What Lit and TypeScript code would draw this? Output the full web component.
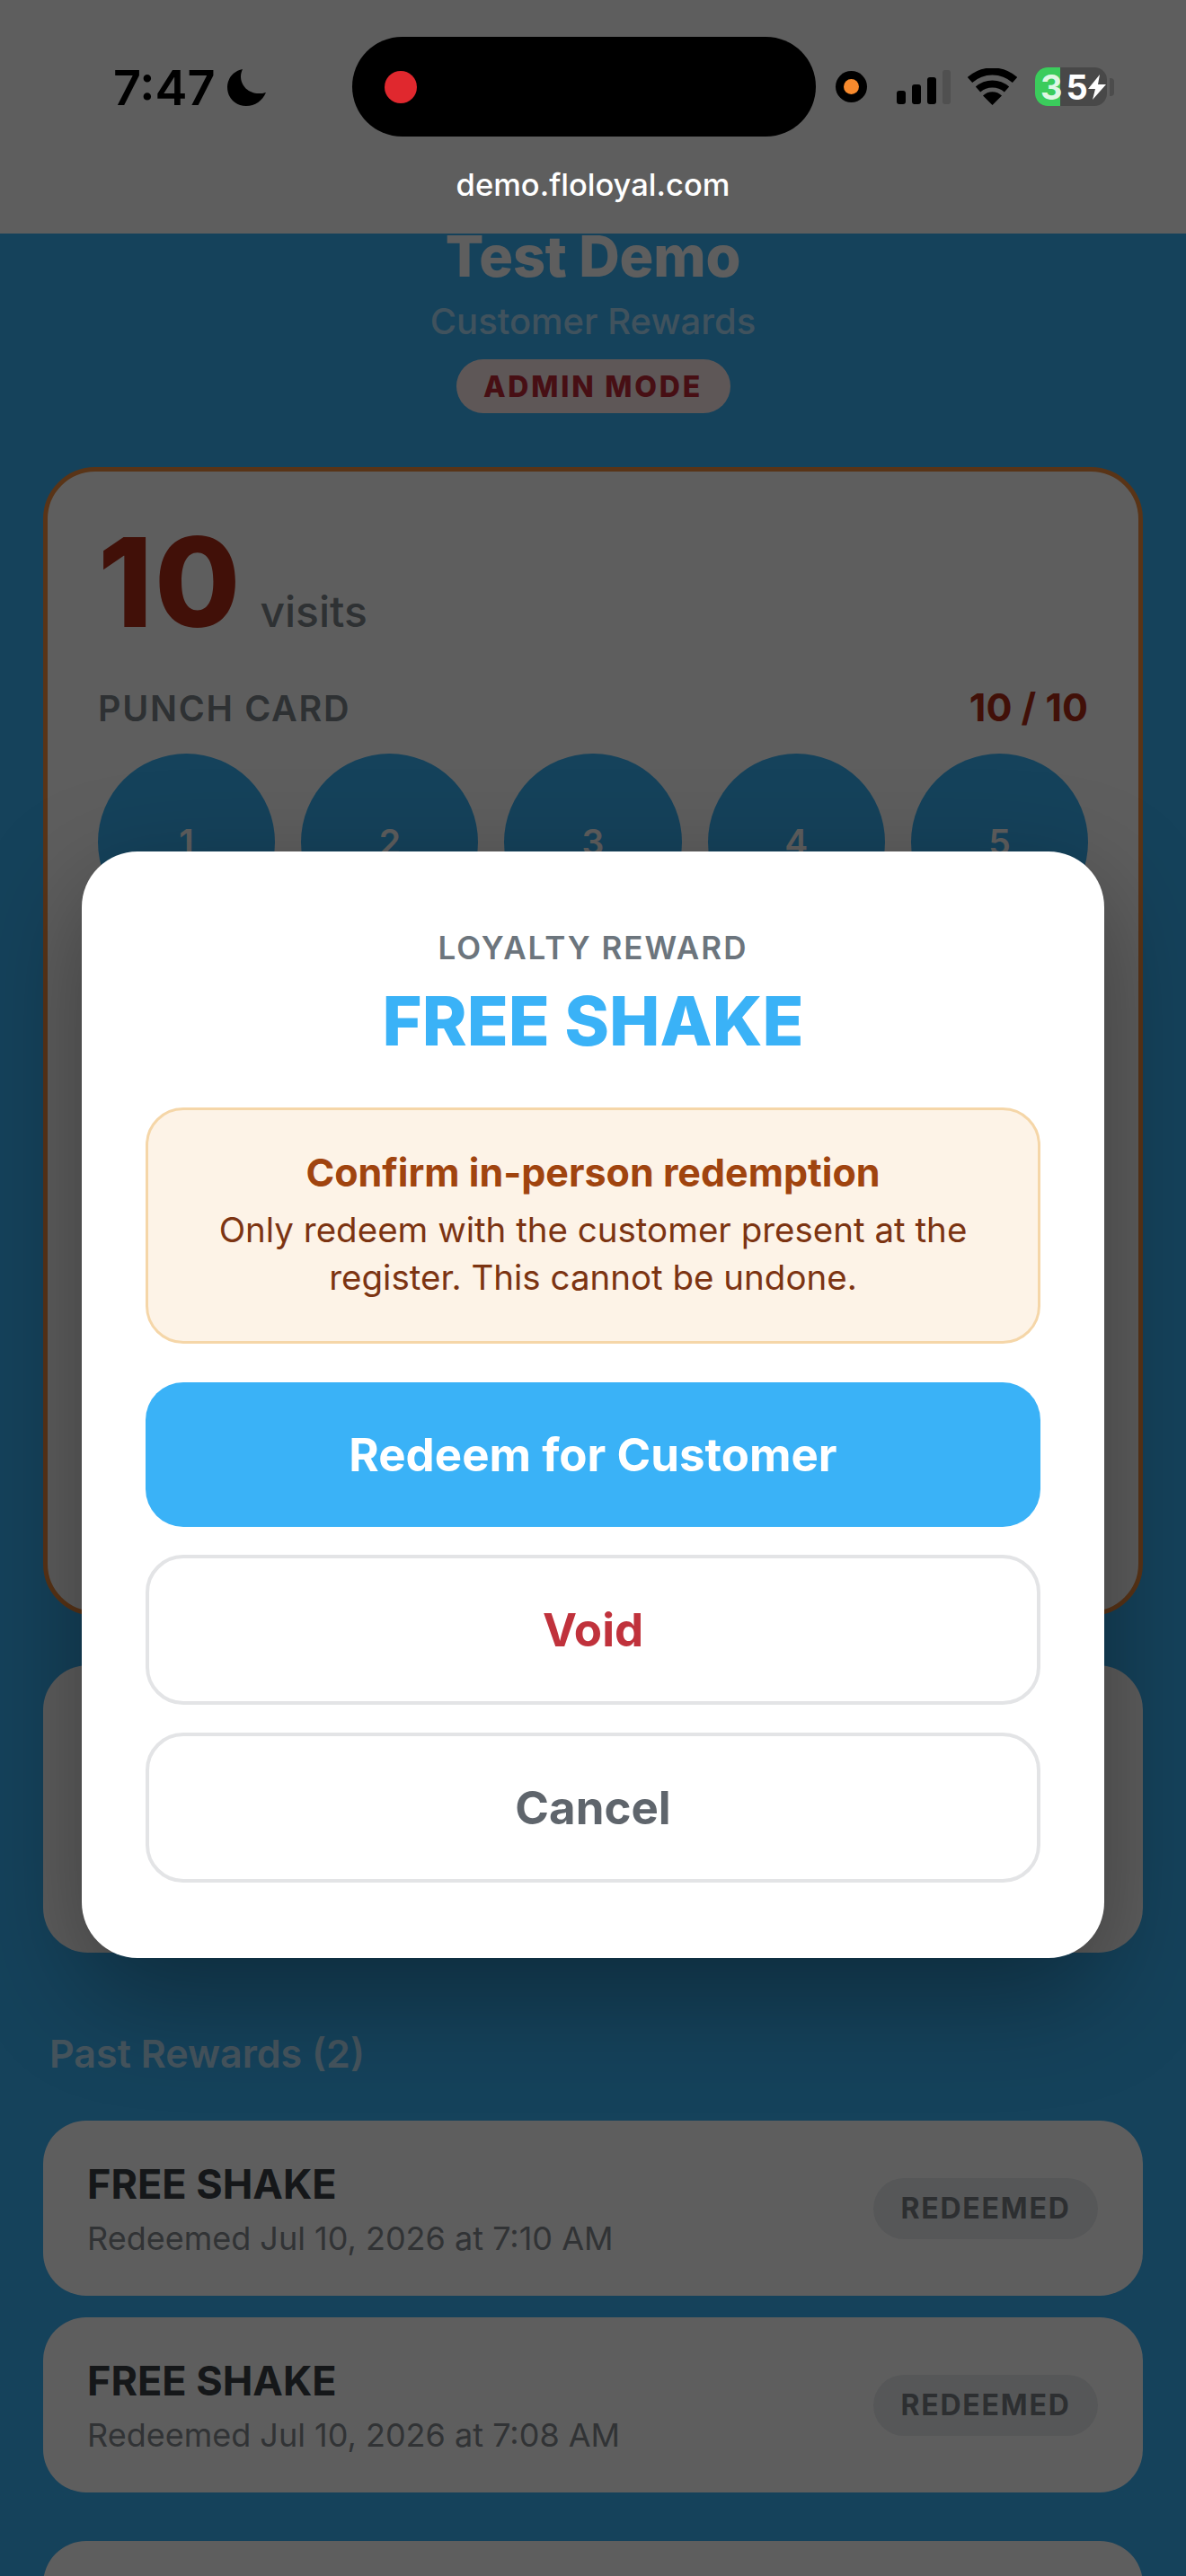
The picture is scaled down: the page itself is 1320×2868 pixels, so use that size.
import { css, html, LitElement } from 'lit';
import { customElement } from 'lit/decorators.js';
import { map } from 'lit/directives/map.js';

interface PastReward {
  title: string;
  when: string;
}

// the second row of punches sits fully behind the dialog
const PUNCHES = [1, 2, 3, 4, 5];

const PAST_REWARDS: PastReward[] = [
  { title: 'FREE SHAKE', when: 'Redeemed Jul 10, 2026 at 7:10 AM' },
  { title: 'FREE SHAKE', when: 'Redeemed Jul 10, 2026 at 7:08 AM' },
];

@customElement('app-root')
export class AppRoot extends LitElement {
  static override styles = css`
    :host {
      display: block;
      position: relative;
      width: 1320px;
      height: 2868px;
      overflow: hidden;
      font-family: Inter, 'Liberation Sans', sans-serif;
    }
    * {
      box-sizing: border-box;
    }

    /* page under the dialog */
    .page {
      height: 2868px;
      padding: 254px 48px 0;
      background: #3ab2f7;
    }
    .brand {
      margin: 0;
      font-size: 63px;
      line-height: 62px;
      font-weight: 800;
      letter-spacing: -0.2px;
      text-align: center;
      color: #fff;
    }
    .tagline {
      margin-top: 20px;
      font-size: 40px;
      line-height: 44px;
      font-weight: 500;
      text-align: center;
      color: rgba(255, 255, 255, 0.6);
    }
    .admin-row {
      display: flex;
      justify-content: center;
      margin-top: 20px;
    }
    .admin-pill {
      display: flex;
      align-items: center;
      justify-content: center;
      width: 305px;
      height: 60px;
      border-radius: 30px;
      background: #ffecec;
      color: #c02a38;
      font-size: 32px;
      font-weight: 800;
      letter-spacing: 2.8px;
    }
    .card {
      height: 1279px;
      margin-top: 60px;
      padding: 56px 56px 0;
      border: 5px solid #f28e3e;
      border-radius: 58px;
      background: #fff;
    }
    .visits {
      display: flex;
      align-items: baseline;
      gap: 20px;
    }
    .visits b {
      font-size: 138px;
      line-height: 134px;
      font-weight: 800;
      letter-spacing: 2px;
      color: #b02c16;
    }
    .visits span {
      font-size: 48px;
      font-weight: 500;
      color: #7d858c;
    }
    .punch-head {
      display: flex;
      align-items: baseline;
      justify-content: space-between;
      margin-top: 50px;
      line-height: 44px;
      font-size: 39.500px;
      font-weight: 600;
      letter-spacing: 1.7px;
      color: #7d858c;
    }
    .punch-head b {
      font-size: 43px;
      font-weight: 700;
      letter-spacing: 0;
      color: #b02c16;
    }
    .punches {
      display: grid;
      grid-template-columns: repeat(5, 1fr);
      gap: 29px;
      margin-top: 28px;
    }
    .punch {
      display: flex;
      align-items: center;
      justify-content: center;
      aspect-ratio: 1;
      border-radius: 50%;
      background: #3ab2f7;
      color: #fff;
      font-size: 39px;
      font-weight: 600;
    }
    .blank-card {
      height: 320px;
      margin-top: 55px;
      border-radius: 50px;
      background: #fff;
    }
    .past-title {
      margin-top: 89px;
      padding-left: 7px;
      font-size: 43px;
      line-height: 46px;
      font-weight: 600;
      color: rgba(255, 255, 255, 0.68);
    }
    .rows {
      display: flex;
      flex-direction: column;
      gap: 24px;
      margin-top: 52px;
    }
    .row {
      display: flex;
      align-items: center;
      justify-content: space-between;
      height: 195px;
      padding: 0 50px 0 49px;
      border-radius: 48px;
      background: #fff;
    }
    .row-title {
      padding-top: 2px;
      font-size: 45px;
      line-height: 50px;
      font-weight: 700;
      color: #3a3f45;
    }
    .row-when {
      margin-top: 14px;
      font-size: 36px;
      line-height: 42px;
      color: #858b91;
    }
    .status-pill {
      display: flex;
      align-items: center;
      justify-content: center;
      width: 250px;
      height: 68px;
      border-radius: 34px;
      background: #e9ecef;
      color: #7b8085;
      font-size: 32px;
      font-weight: 700;
      letter-spacing: 1.8px;
    }
    .tail-card {
      height: 200px;
      margin-top: 54px;
      border-radius: 48px;
      background: #fff;
    }

    /* dialog */
    .scrim {
      position: absolute;
      inset: 0;
      display: flex;
      justify-content: center;
      align-items: flex-start;
      padding-top: 948px;
      background: rgba(0, 0, 0, 0.63);
    }
    .modal {
      width: 1138px;
      padding: 86px 71px 84px;
      border-radius: 62px;
      background: #fff;
      box-shadow: 0 40px 120px rgba(0, 0, 0, 0.35);
    }
    .eyebrow {
      font-size: 35px;
      line-height: 42px;
      font-weight: 600;
      letter-spacing: 2px;
      text-align: center;
      color: #6c757d;
    }
    .reward-name {
      margin: 14px 0 0;
      font-size: 75.500px;
      line-height: 94px;
      font-weight: 800;
      text-align: center;
      color: #3ab2f7;
    }
    .warning {
      height: 263px;
      margin-top: 49px;
      padding: 44px 40px;
      border: 3px solid #f5d6a8;
      border-radius: 42px;
      background: #fdf3e7;
      text-align: center;
    }
    .warning-title {
      font-size: 43px;
      line-height: 50px;
      font-weight: 700;
      color: #a0440f;
    }
    .warning-body {
      margin-top: 13px;
      font-size: 38.500px;
      line-height: 53px;
      color: #7c3412;
    }
    .btn {
      display: flex;
      align-items: center;
      justify-content: center;
      width: 100%;
      height: 167px;
      margin-top: 31px;
      padding: 0;
      border: 4px solid #e3e4e6;
      border-radius: 42px;
      background: #fff;
      font-family: inherit;
      font-size: 51px;
      font-weight: 700;
    }
    .btn.primary {
      height: 161px;
      margin-top: 43px;
      border: none;
      background: #3ab2f7;
      color: #fff;
    }
    .btn.void {
      color: #c0323c;
    }
    .btn.cancel {
      color: #5f656c;
    }

    /* browser chrome on top of everything */
    .chrome {
      position: absolute;
      top: 0;
      left: 0;
      right: 0;
      height: 260px;
      padding-top: 41px;
      background: #5e5e5e;
    }
    .status {
      display: grid;
      grid-template-columns: 392px 516px 1fr;
      align-items: center;
      height: 111px;
    }
    .status-left {
      display: flex;
      align-items: center;
      gap: 13px;
      padding: 2px 0 0 126px;
    }
    .time {
      font-size: 54px;
      line-height: 54px;
      font-weight: 600;
      color: #000;
    }
    .island {
      display: flex;
      align-items: center;
      height: 111px;
      padding-left: 36px;
      border-radius: 56px;
      background: #000;
    }
    .rec {
      width: 36px;
      height: 36px;
      border-radius: 50%;
      background: #e0282e;
    }
    .status-right {
      display: flex;
      align-items: center;
      padding-left: 22px;
    }
    .cam {
      display: flex;
      align-items: center;
      justify-content: center;
      width: 35px;
      height: 35px;
      border-radius: 50%;
      background: #000;
    }
    .cam i {
      width: 17px;
      height: 17px;
      border-radius: 50%;
      background: #f78a2d;
    }
    .signal {
      margin-left: 33px;
    }
    .wifi {
      margin-left: 19px;
    }
    .battery {
      position: relative;
      display: flex;
      align-items: center;
      width: 80px;
      height: 43px;
      margin-left: 20px;
      padding-left: 6px;
      overflow: hidden;
      border-radius: 14px;
      background: #484848;
      font-size: 38px;
      line-height: 38px;
      font-weight: 700;
      color: #fff;
    }
    .battery-fill {
      position: absolute;
      inset: 0 52px 0 0;
      background: #3bcc5c;
    }
    .battery span,
    .battery svg {
      position: relative;
    }
    .battery .low {
      color: #dff7e4;
      margin-right: 4px;
    }
    .nub {
      width: 5px;
      height: 20px;
      margin-left: 3px;
      border-radius: 0 4px 4px 0;
      background: #4c4c4c;
    }
    .url {
      margin-top: 34px;
      font-size: 34.500px;
      line-height: 40px;
      font-weight: 500;
      text-align: center;
      color: #fff;
    }
  `;

  private _renderStatusBar() {
    return html`
      <div class="status">
        <div class="status-left">
          <span class="time">7:47</span>
          <svg width="43" height="41" viewBox="0 0 43 41">
            <path d="M17 0C7 2 0 10 0 20c0 12 9 21 21 21 10 0 18-6 22-15-3 1-5 1-8 1C24 27 15 19 15 8c0-3 1-6 2-8z" />
          </svg>
        </div>
        <div class="island"><div class="rec"></div></div>
        <div class="status-right">
          <div class="cam"><i></i></div>
          <svg class="signal" width="60" height="38" viewBox="0 0 60 38">
            <rect x="0" y="23" width="10" height="15" rx="3" />
            <rect x="17" y="16" width="10" height="22" rx="3" />
            <rect x="34" y="8" width="10" height="30" rx="3" />
            <rect x="51" y="0" width="9" height="38" rx="3" fill="#505050" />
          </svg>
          <svg class="wifi" width="55" height="41" viewBox="0 0 55 41">
            <path d="M2.5 13A37.5 37.5 0 0 1 52.5 13" fill="none" stroke="#000" stroke-width="8" />
            <path d="M11.5 23.5A24 24 0 0 1 43.5 23.5" fill="none" stroke="#000" stroke-width="8" />
            <path d="M27.5 41L17 30.500A15 15 0 0 1 38 30.500Z" />
          </svg>
          <div class="battery">
            <div class="battery-fill"></div>
            <span class="low">3</span><span>5</span>
            <svg width="20" height="28" viewBox="0 0 20 28">
              <path d="M13 0L0 16h8L5 28 20 11h-9z" fill="#fff" />
            </svg>
          </div>
          <div class="nub"></div>
        </div>
      </div>
      <div class="url">demo.floloyal.com</div>
    `;
  }

  private _renderPage() {
    return html`
      <div class="page">
        <h1 class="brand">Test Demo</h1>
        <div class="tagline">Customer Rewards</div>
        <div class="admin-row"><div class="admin-pill">ADMIN MODE</div></div>

        <section class="card">
          <div class="visits"><b>10</b><span>visits</span></div>
          <div class="punch-head"><span>PUNCH CARD</span><b>10 / 10</b></div>
          <div class="punches">
            ${map(PUNCHES, (n) => html`<div class="punch">${n}</div>`)}
          </div>
        </section>

        <div class="blank-card"></div>

        <div class="past-title">Past Rewards (2)</div>
        <div class="rows">
          ${map(
            PAST_REWARDS,
            (reward) => html`
              <div class="row">
                <div>
                  <div class="row-title">${reward.title}</div>
                  <div class="row-when">${reward.when}</div>
                </div>
                <div class="status-pill">REDEEMED</div>
              </div>
            `
          )}
        </div>
        <div class="tail-card"></div>
      </div>
    `;
  }

  override render() {
    return html`
      ${this._renderPage()}
      <div class="scrim">
        <div class="modal">
          <div class="eyebrow">LOYALTY REWARD</div>
          <h2 class="reward-name">FREE SHAKE</h2>
          <div class="warning">
            <div class="warning-title">Confirm in-person redemption</div>
            <div class="warning-body">
              Only redeem with the customer present at the register. This cannot be undone.
            </div>
          </div>
          <button class="btn primary">Redeem for Customer</button>
          <button class="btn void">Void</button>
          <button class="btn cancel">Cancel</button>
        </div>
      </div>
      <div class="chrome">${this._renderStatusBar()}</div>
    `;
  }
}

declare global {
  interface HTMLElementTagNameMap {
    'app-root': AppRoot;
  }
}
